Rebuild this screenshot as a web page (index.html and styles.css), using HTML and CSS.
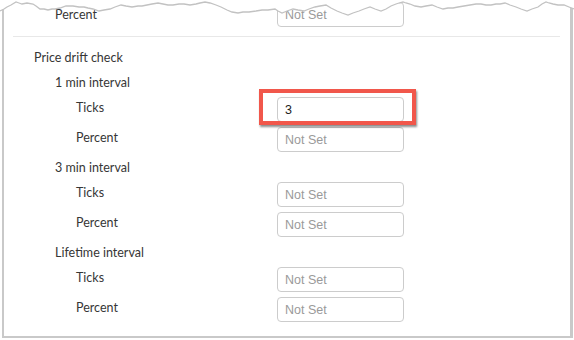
FILE: index.html
```html
<!DOCTYPE html>
<html lang="en">
<head>
  <meta charset="UTF-8">
  <title>Price drift check</title>
  <link rel="stylesheet" href="styles.css">
</head>
<body>
  <div class="frame">
    <div class="form">
      <div class="field lvl1 top-field">
        <span class="label">Percent</span>
        <input type="text" placeholder="Not Set">
      </div>
      <div class="divider"></div>

      <div class="heading lvl0">Price drift check</div>

      <div class="heading lvl1">1 min interval</div>
      <div class="field lvl2">
        <span class="label">Ticks</span>
        <div class="marked">
          <input type="text" value="3">
          <span class="highlight"></span>
        </div>
      </div>
      <div class="field lvl2">
        <span class="label">Percent</span>
        <input type="text" placeholder="Not Set">
      </div>

      <div class="heading lvl1">3 min interval</div>
      <div class="field lvl2">
        <span class="label">Ticks</span>
        <input type="text" placeholder="Not Set">
      </div>
      <div class="field lvl2">
        <span class="label">Percent</span>
        <input type="text" placeholder="Not Set">
      </div>

      <div class="heading lvl1">Lifetime interval</div>
      <div class="field lvl2">
        <span class="label">Ticks</span>
        <input type="text" placeholder="Not Set">
      </div>
      <div class="field lvl2">
        <span class="label">Percent</span>
        <input type="text" placeholder="Not Set">
      </div>
    </div>

    <!-- torn paper edge over the top of the capture -->
    <svg class="tear" width="574" height="18" viewBox="0 0 574 18">
      <polygon fill="#ffffff" points="0,0 0,11 4,9 7,7 11,5 16,2 19,3 22,4 27,3 33,4 36,6 40,9 44,9 48,10 52,9 55,9 60,8 66,6 70,6 73,6 79,7 84,7 88,8 93,9 99,11 104,10 110,9 115,7 121,5 126,6 132,7 138,6 142,6 147,5 152,4 158,3 163,4 168,5 173,5 179,4 184,4 190,5 196,4 200,3 205,2 210,3 216,5 221,7 227,10 232,12 238,13 243,12 249,12 256,11 262,10 268,10 275,9 278,11 282,13 287,11 293,9 298,10 304,11 309,9 315,7 320,6 326,5 331,8 337,11 342,13 348,15 353,13 359,11 364,9 370,7 375,9 381,11 386,9 391,6 396,4 399,3 403,2 406,3 410,4 415,6 421,7 426,6 432,5 437,7 443,9 448,8 453,8 458,7 464,6 470,5 476,4 481,4 486,5 491,5 496,4 500,4 505,3 510,5 516,7 521,9 527,11 532,9 538,7 542,4 546,2 549,3 553,4 558,5 564,5 569,7 574,9 574,0"/>
      <polyline fill="none" stroke="#c2c2c2" stroke-width="1.3" points="0,11 4,9 7,7 11,5 16,2 19,3 22,4 27,3 33,4 36,6 40,9 44,9 48,10 52,9 55,9 60,8 66,6 70,6 73,6 79,7 84,7 88,8 93,9 99,11 104,10 110,9 115,7 121,5 126,6 132,7 138,6 142,6 147,5 152,4 158,3 163,4 168,5 173,5 179,4 184,4 190,5 196,4 200,3 205,2 210,3 216,5 221,7 227,10 232,12 238,13 243,12 249,12 256,11 262,10 268,10 275,9 278,11 282,13 287,11 293,9 298,10 304,11 309,9 315,7 320,6 326,5 331,8 337,11 342,13 348,15 353,13 359,11 364,9 370,7 375,9 381,11 386,9 391,6 396,4 399,3 403,2 406,3 410,4 415,6 421,7 426,6 432,5 437,7 443,9 448,8 453,8 458,7 464,6 470,5 476,4 481,4 486,5 491,5 496,4 500,4 505,3 510,5 516,7 521,9 527,11 532,9 538,7 542,4 546,2 549,3 553,4 558,5 564,5 569,7 574,9"/>
    </svg>
  </div>
</body>
</html>
```

FILE: styles.css
```css
body {
  margin: 0;
  background-color: #ffffff;
  font-family: Lato, 'Open Sans', sans-serif;
  font-size: 12.5px;
  color: #363636;
}
.frame {
  position: relative;
  box-sizing: border-box;
  width: 571px;
  height: 338px;
  margin-left: 2px;
  background-color: #ffffff;
  border-left: 2px solid #c9c9c9;
  border-right: 3px solid #c9c9c9;
  border-bottom: 2px solid #c9c9c9;
}
.form {
  display: flex;
  flex-direction: column;
  gap: 5px;
  padding-top: 2px;
}
.divider {
  height: 1px;
  margin: 4px 10px 5px 9px;
  background-color: #e8e8e8;
}
.heading {
  height: 20px;
  line-height: 22px;
}
.field {
  display: flex;
  height: 25px;
}
.field .label {
  box-sizing: border-box;
  width: 273px;
  line-height: 22px;
}
.top-field .label {
  padding-top: 2px;
}
.heading.lvl0 {
  padding-left: 30px;
}
.heading.lvl1,
.lvl1 .label {
  padding-left: 51px;
}
.lvl2 .label {
  padding-left: 72px;
}
.field input {
  box-sizing: border-box;
  width: 127px;
  height: 25px;
  margin: 0;
  padding: 0 7px;
  border: 1px solid #cccccc;
  border-radius: 4px;
  font-family: 'Liberation Sans', Arial, sans-serif;
  font-size: 12.5px;
  color: #222222;
  background-color: #ffffff;
  outline: none;
}
.field input::placeholder {
  color: #9a9a9a;
}
.marked {
  position: relative;
}
.highlight {
  position: absolute;
  left: -18px;
  top: -8px;
  box-sizing: border-box;
  width: 157px;
  height: 36px;
  border: 4px solid #f1574b;
  box-shadow: 1px 2px 2px rgba(0, 0, 0, 0.45);
}
.tear {
  position: absolute;
  top: 0;
  left: -4px;
  display: block;
}
```
